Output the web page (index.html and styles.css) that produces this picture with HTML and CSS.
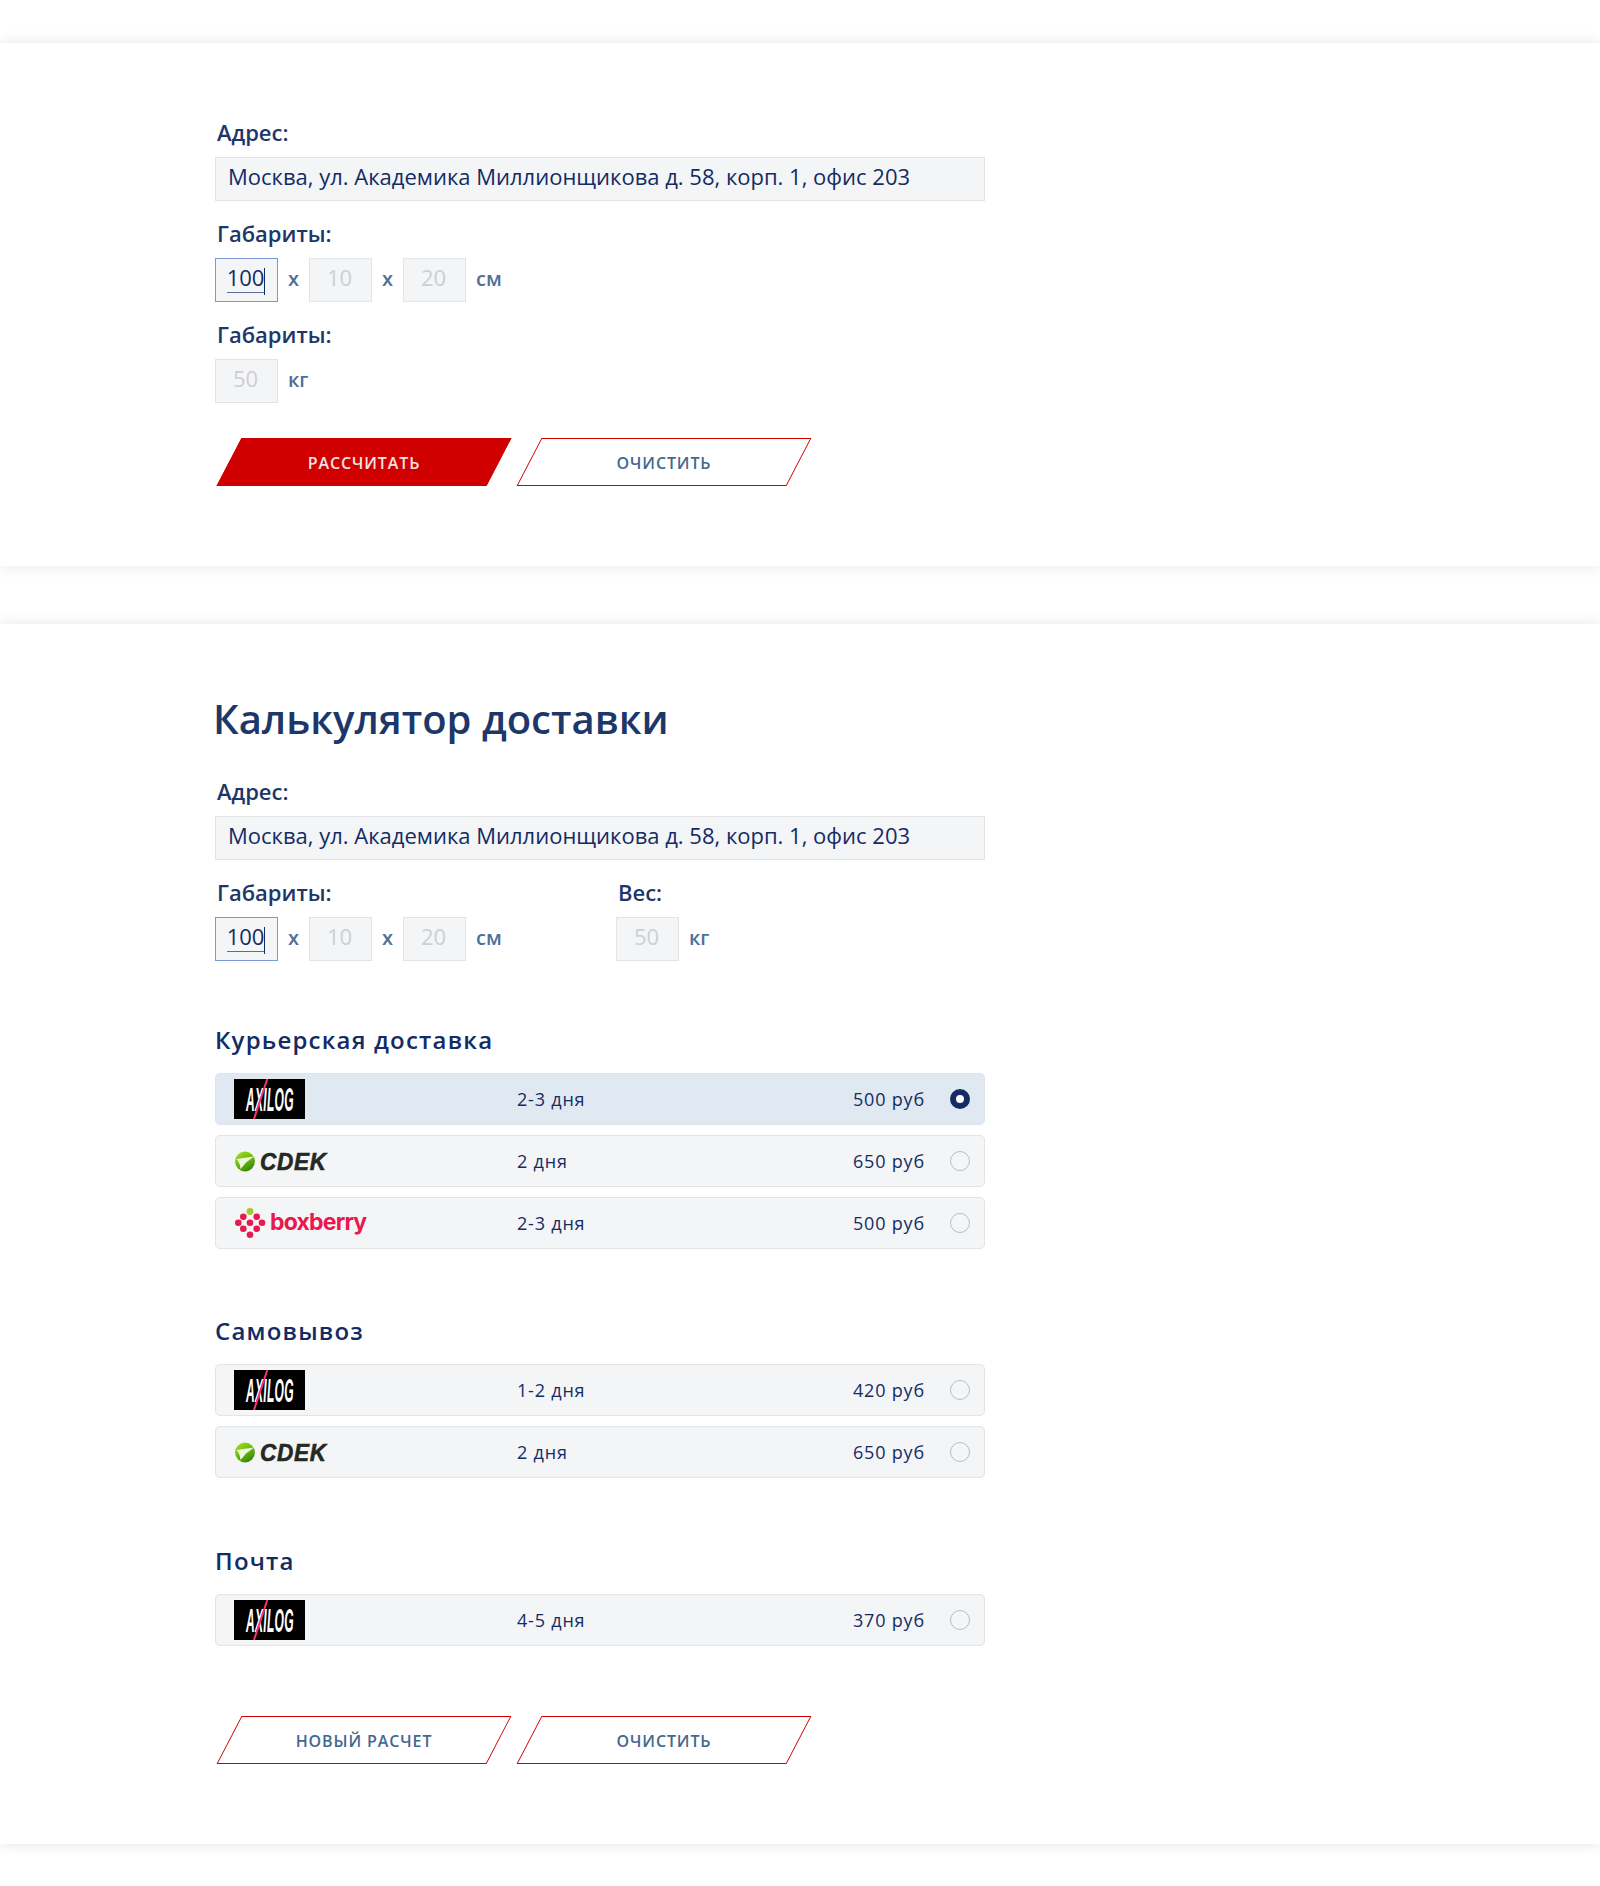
FILE: index.html
```html
<!DOCTYPE html>
<html lang="ru">
<head>
<meta charset="utf-8">
<title>Калькулятор доставки</title>
<link rel="stylesheet" href="styles.css">
</head>
<body>
<svg class="defs" width="0" height="0" aria-hidden="true">
  <defs>
    <linearGradient id="cdekball" x1="0.2" y1="0" x2="0.8" y2="1">
      <stop offset="0" stop-color="#9fdc1e"/>
      <stop offset="0.55" stop-color="#62b20e"/>
      <stop offset="1" stop-color="#2f8008"/>
    </linearGradient>
    <symbol id="logo-axilog" viewBox="0 0 71 40">
      <rect width="71" height="40" fill="#000"/>
      <text class="axilog-text" transform="translate(12 31.7) scale(0.36 1)" x="0" y="0">AXILOG</text>
      <line x1="33.3" y1="0" x2="20" y2="40" stroke="#ff2f6e" stroke-width="2"/>
    </symbol>
    <symbol id="logo-cdek" viewBox="0 0 94 22">
      <circle cx="11" cy="11.5" r="9.9" fill="url(#cdekball)"/>
      <path d="M2.5 9 L20 6.5 L12 12.5 L6.5 19 Q6 13 2.5 9 Z" fill="#eef7dc"/>
      <text class="cdek-text" transform="translate(26 20) scale(0.94 1)" x="0" y="0">CDEK</text>
    </symbol>
    <symbol id="logo-boxberry" viewBox="0 0 135 32">
      <circle cx="16" cy="4.5" r="3.4" fill="#a8c92f"/>
      <g fill="#e8194f">
        <circle cx="9.3" cy="9.7" r="3.3"/><circle cx="22.7" cy="9.7" r="3.3"/>
        <circle cx="4.3" cy="15.7" r="3.3"/><circle cx="16" cy="15.7" r="3.3"/><circle cx="28" cy="15.7" r="3.3"/>
        <circle cx="9.3" cy="21.7" r="3.3"/><circle cx="22.7" cy="21.7" r="3.3"/>
        <circle cx="16" cy="27.7" r="3.3"/>
      </g>
      <text class="boxberry-text" x="36" y="23">boxberry</text>
    </symbol>
  </defs>
</svg>

<section class="panel panel-first">
  <div class="wrap">
    <div class="field-label">Адрес:</div>
    <div class="input input-wide">Москва, ул. Академика Миллионщикова д. 58, корп. 1, офис 203</div>
    <div class="field-label field-label-next">Габариты:</div>
    <div class="dims">
      <div class="input input-small input-focus"><span class="typed">100</span></div>
      <span class="unit">х</span>
      <div class="input input-small input-empty">10</div>
      <span class="unit">х</span>
      <div class="input input-small input-empty">20</div>
      <span class="unit">см</span>
    </div>
    <div class="field-label field-label-next">Габариты:</div>
    <div class="dims">
      <div class="input input-small input-empty">50</div>
      <span class="unit">кг</span>
    </div>
    <div class="buttons">
      <button class="btn btn-solid" type="button"><span>РАССЧИТАТЬ</span></button>
      <button class="btn" type="button"><span>ОЧИСТИТЬ</span></button>
    </div>
  </div>
</section>

<section class="panel panel-second">
  <div class="wrap">
    <h1 class="title">Калькулятор доставки</h1>
    <div class="field-label">Адрес:</div>
    <div class="input input-wide">Москва, ул. Академика Миллионщикова д. 58, корп. 1, офис 203</div>
    <div class="dim-columns">
      <div class="dim-col">
        <div class="field-label">Габариты:</div>
        <div class="dims">
          <div class="input input-small input-focus"><span class="typed">100</span></div>
          <span class="unit">х</span>
          <div class="input input-small input-empty">10</div>
          <span class="unit">х</span>
          <div class="input input-small input-empty">20</div>
          <span class="unit">см</span>
        </div>
      </div>
      <div class="dim-col">
        <div class="field-label">Вес:</div>
        <div class="dims">
          <div class="input input-small input-empty">50</div>
          <span class="unit">кг</span>
        </div>
      </div>
    </div>

    <h2 class="group-title group-first">Курьерская доставка</h2>
    <div class="rows">
      <div class="row row-active">
        <div class="logo"><svg class="svg-axilog"><use href="#logo-axilog"/></svg></div>
        <div class="days">2-3 дня</div><div class="price">500 руб</div><span class="radio radio-on"></span>
      </div>
      <div class="row">
        <div class="logo"><svg class="svg-cdek"><use href="#logo-cdek"/></svg></div>
        <div class="days">2 дня</div><div class="price">650 руб</div><span class="radio"></span>
      </div>
      <div class="row">
        <div class="logo"><svg class="svg-boxberry"><use href="#logo-boxberry"/></svg></div>
        <div class="days">2-3 дня</div><div class="price">500 руб</div><span class="radio"></span>
      </div>
    </div>

    <h2 class="group-title">Самовывоз</h2>
    <div class="rows">
      <div class="row">
        <div class="logo"><svg class="svg-axilog"><use href="#logo-axilog"/></svg></div>
        <div class="days">1-2 дня</div><div class="price">420 руб</div><span class="radio"></span>
      </div>
      <div class="row">
        <div class="logo"><svg class="svg-cdek"><use href="#logo-cdek"/></svg></div>
        <div class="days">2 дня</div><div class="price">650 руб</div><span class="radio"></span>
      </div>
    </div>

    <h2 class="group-title group-last">Почта</h2>
    <div class="rows">
      <div class="row">
        <div class="logo"><svg class="svg-axilog"><use href="#logo-axilog"/></svg></div>
        <div class="days">4-5 дня</div><div class="price">370 руб</div><span class="radio"></span>
      </div>
    </div>

    <div class="buttons buttons-bottom">
      <button class="btn" type="button"><span>НОВЫЙ РАСЧЕТ</span></button>
      <button class="btn" type="button"><span>ОЧИСТИТЬ</span></button>
    </div>
  </div>
</section>
</body>
</html>
```
FILE: styles.css
```css
* { box-sizing: border-box; }
html, body { margin: 0; padding: 0; }
body {
  background: #fff;
  font-family: "Open Sans", sans-serif;
  color: #132c63;
  padding-top: 43px;
  height: 1886px;
  overflow: hidden;
}
.defs { position: absolute; }
.panel {
  background: #fff;
  box-shadow: 0 0 14px rgba(0, 0, 0, 0.1);
}
.panel-first { height: 523px; padding-top: 75px; }
.panel-second { height: 1220px; margin-top: 58px; padding-top: 68px; }
.wrap { width: 770px; margin-left: 215px; }

.title {
  margin: 0 0 31px -2px;
  font-size: 40px;
  line-height: 54px;
  font-weight: 600;
  color: #1d3769;
}
.field-label {
  font-size: 22px;
  line-height: 28px;
  font-weight: 600;
  padding-left: 2px;
  margin-bottom: 11px;
  color: #1d3769;
}
.field-label-next { margin-top: 18px; }
.input {
  background: #f4f5f7;
  border: 1px solid #e3e4e6;
  height: 44px;
  font-size: 22px;
  line-height: 36px;
  color: #132c63;
}
.input-wide { width: 770px; padding-left: 12px; }
.dims { display: flex; align-items: center; }
.input-small { width: 63px; text-align: center; flex: none; padding-right: 2px; }
.input-empty { color: #cdcfd2; }
.input-focus { border-color: #7d98d6; }
.typed {
  position: relative;
  display: inline-block;
  line-height: 30px;
  height: 31px;
  border-bottom: 1px solid #5a6e99;
}
.typed::after {
  content: "";
  position: absolute;
  right: -1px;
  top: 6px;
  width: 1px;
  height: 27px;
  background: #132c63;
}
.unit {
  font-size: 20px;
  line-height: 42px;
  height: 44px;
  font-weight: 600;
  color: #4f7197;
  padding-left: 10px;
  width: 31px;
  white-space: nowrap;
}
.dim-columns { display: flex; margin-top: 18px; }
.dim-col { width: 401px; flex: none; }

.buttons { display: flex; gap: 30px; margin-top: 35px; padding-left: 14px; }
.buttons-bottom { margin-top: 70px; }
.btn {
  position: relative;
  width: 270px;
  height: 48px;
  padding: 1px 0 0;
  border: 0;
  background: none;
  font-family: "Open Sans", sans-serif;
  font-size: 16px;
  font-weight: 600;
  letter-spacing: 0.9px;
  color: #44688f;
}
.btn::before {
  content: "";
  position: absolute;
  inset: 0;
  border: 1px solid #d00000;
  transform: skewX(-27.5deg);
}
.btn span { position: relative; }
.btn-solid { color: #f2e2e2; }
.btn-solid::before { background: #d00000; }

.group-title {
  margin: 0 0 17px 0;
  font-size: 24px;
  line-height: 32px;
  font-weight: 600;
  letter-spacing: 1.2px;
  color: #132c63;
}
.group-first { margin-top: 63px; }
.rows { display: flex; flex-direction: column; gap: 10px; }
.rows + .group-title { margin-top: 66px; }
.rows + .group-last { margin-top: 67px; }
.row {
  display: flex;
  align-items: center;
  height: 52px;
  background: #f4f5f7;
  border: 1px solid #e3e4e6;
  border-radius: 5px;
  padding-left: 18px;
  font-size: 18px;
  letter-spacing: 0.8px;
  color: #132c63;
}
.row-active { background: #e0e8f1; border-color: #dfe4ea; }
.logo { width: 283px; display: flex; align-items: center; flex: none; }
.days { width: 336px; flex: none; }
.price { width: 97px; flex: none; }
.radio {
  width: 20px;
  height: 20px;
  border-radius: 50%;
  border: 1px solid #bdbdbd;
  flex: none;
}
.radio-on { border: 6px solid #132c63; background: #fff; }

.svg-axilog { width: 71px; height: 40px; display: block; }
.svg-cdek { width: 94px; height: 22px; display: block; }
.svg-boxberry { width: 135px; height: 32px; display: block; }
.axilog-text {
  font-family: "Liberation Sans", sans-serif;
  font-style: italic;
  font-weight: 700;
  font-size: 33.5px;
  fill: #fff;
}
.cdek-text {
  font-family: "Liberation Sans", sans-serif;
  font-style: italic;
  font-weight: 700;
  font-size: 24px;
  fill: #25291f;
  stroke: #25291f;
  stroke-width: 0.6px;
}
.boxberry-text {
  font-family: "Inter", sans-serif;
  font-weight: 700;
  font-size: 23px;
  letter-spacing: -0.8px;
  fill: #e8194f;
}
```
